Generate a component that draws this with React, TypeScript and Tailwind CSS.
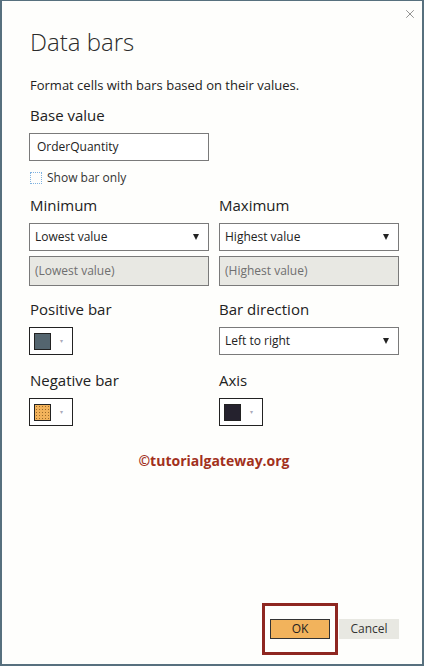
import { X } from "lucide-react";

function Select({ value }: { value: string }) {
  return (
    <div className="flex h-[28px] items-center justify-between border border-[#7a7a7a] bg-white pl-[5px] pr-[9px] text-[12px] text-[#222]">
      <span>{value}</span>
      <svg width="6" height="6" viewBox="0 0 6 6">
        <path d="M0 0h6L3 6z" fill="#222" />
      </svg>
    </div>
  );
}

function Disabled({ value }: { value: string }) {
  return (
    <div className="mt-[5px] flex h-[30px] items-center border border-[#7a7a7a] bg-[#e8e8e3] pl-[5px] text-[12px] text-[#6f6f6f]">
      {value}
    </div>
  );
}

function Swatch({ color, dotted }: { color: string; dotted?: boolean }) {
  return (
    <div className="flex h-[28px] w-[44px] items-center border border-[#222] bg-white pl-[4px]">
      <div
        className="h-[17px] w-[17px] border border-[#222]"
        style={{
          backgroundColor: color,
          backgroundImage: dotted ? "radial-gradient(#9b6a2a 0.6px, transparent 0.8px)" : undefined,
          backgroundSize: dotted ? "3px 3px" : undefined,
        }}
      />
      <span className="ml-[9px] text-[6px] leading-none text-[#aab]">▾</span>
    </div>
  );
}

export default function App() {
  const label = "text-[15px] text-[#222] leading-none";
  return (
    <div
      className="flex h-[666px] w-[424px] flex-col border-b-2 border-l-2 border-r-2 border-t border-[#57707e] bg-[#fefefc]"
      style={{ fontFamily: '"Open Sans", "Noto Sans", sans-serif' }}
    >
      <div className="flex justify-end pr-[5px] pt-[6px]">
        <X size={14} strokeWidth={1.2} className="text-[#666]" />
      </div>
      <div className="flex flex-1 flex-col pl-[27px] pr-[23px]">
        <h1 className="ml-[1px] mt-[9px] text-[24px] font-light leading-none text-[#2b2b2b]">Data bars</h1>
        <p className="ml-[1px] mt-[25px] text-[13px] leading-none text-[#222]">Format cells with bars based on their values.</p>
        <div className={`ml-[1px] mt-[16px] ${label}`}>Base value</div>
        <div className="mt-[10px] flex h-[28px] w-[180px] items-center border border-[#7a7a7a] bg-white pl-[7px] text-[12px] text-[#222]">
          OrderQuantity
        </div>
        <div className="ml-[1px] mt-[8px] flex items-center gap-[5px] text-[12px] text-[#333]">
          <div className="h-[12px] w-[12px] border border-dotted border-[#7fb2e0]" />
          Show bar only
        </div>

        <div className="mt-[11px] grid grid-cols-[180px_180px] gap-x-[10px]">
          <div className="flex flex-col">
            <div className={`ml-[1px] ${label}`}>Minimum</div>
            <div className="mt-[10px]"><Select value="Lowest value" /></div>
            <Disabled value="(Lowest value)" />
          </div>
          <div className="flex flex-col">
            <div className={label}>Maximum</div>
            <div className="mt-[10px]"><Select value="Highest value" /></div>
            <Disabled value="(Highest value)" />
          </div>

          <div className="mt-[16px] flex flex-col">
            <div className={`ml-[1px] ${label}`}>Positive bar</div>
            <div className="mt-[10px]"><Swatch color="#54656f" /></div>
          </div>
          <div className="mt-[16px] flex flex-col">
            <div className={label}>Bar direction</div>
            <div className="mt-[10px]"><Select value="Left to right" /></div>
          </div>

          <div className="mt-[18px] flex flex-col">
            <div className={`ml-[1px] ${label}`}>Negative bar</div>
            <div className="mt-[10px]"><Swatch color="#f2b25b" dotted /></div>
          </div>
          <div className="mt-[18px] flex flex-col">
            <div className={label}>Axis</div>
            <div className="mt-[10px]"><Swatch color="#25222e" /></div>
          </div>
        </div>

        <div className="mt-[24px] text-center text-[14px] font-bold text-[#a2311c]">©tutorialgateway.org</div>

        <div className="mb-[9px] mt-auto flex items-center justify-end gap-[1px]">
          <div className="border-[3px] border-[#8e2620] px-[5px] py-[13px]">
            <div className="flex h-[20px] w-[60px] items-center justify-center border border-[#333] bg-[#f2b35c] text-[12px] text-[#222]">
              OK
            </div>
          </div>
          <div className="flex h-[20px] w-[60px] items-center justify-center bg-[#e8e8e2] text-[12px] text-[#333]">
            Cancel
          </div>
        </div>
      </div>
    </div>
  );
}
